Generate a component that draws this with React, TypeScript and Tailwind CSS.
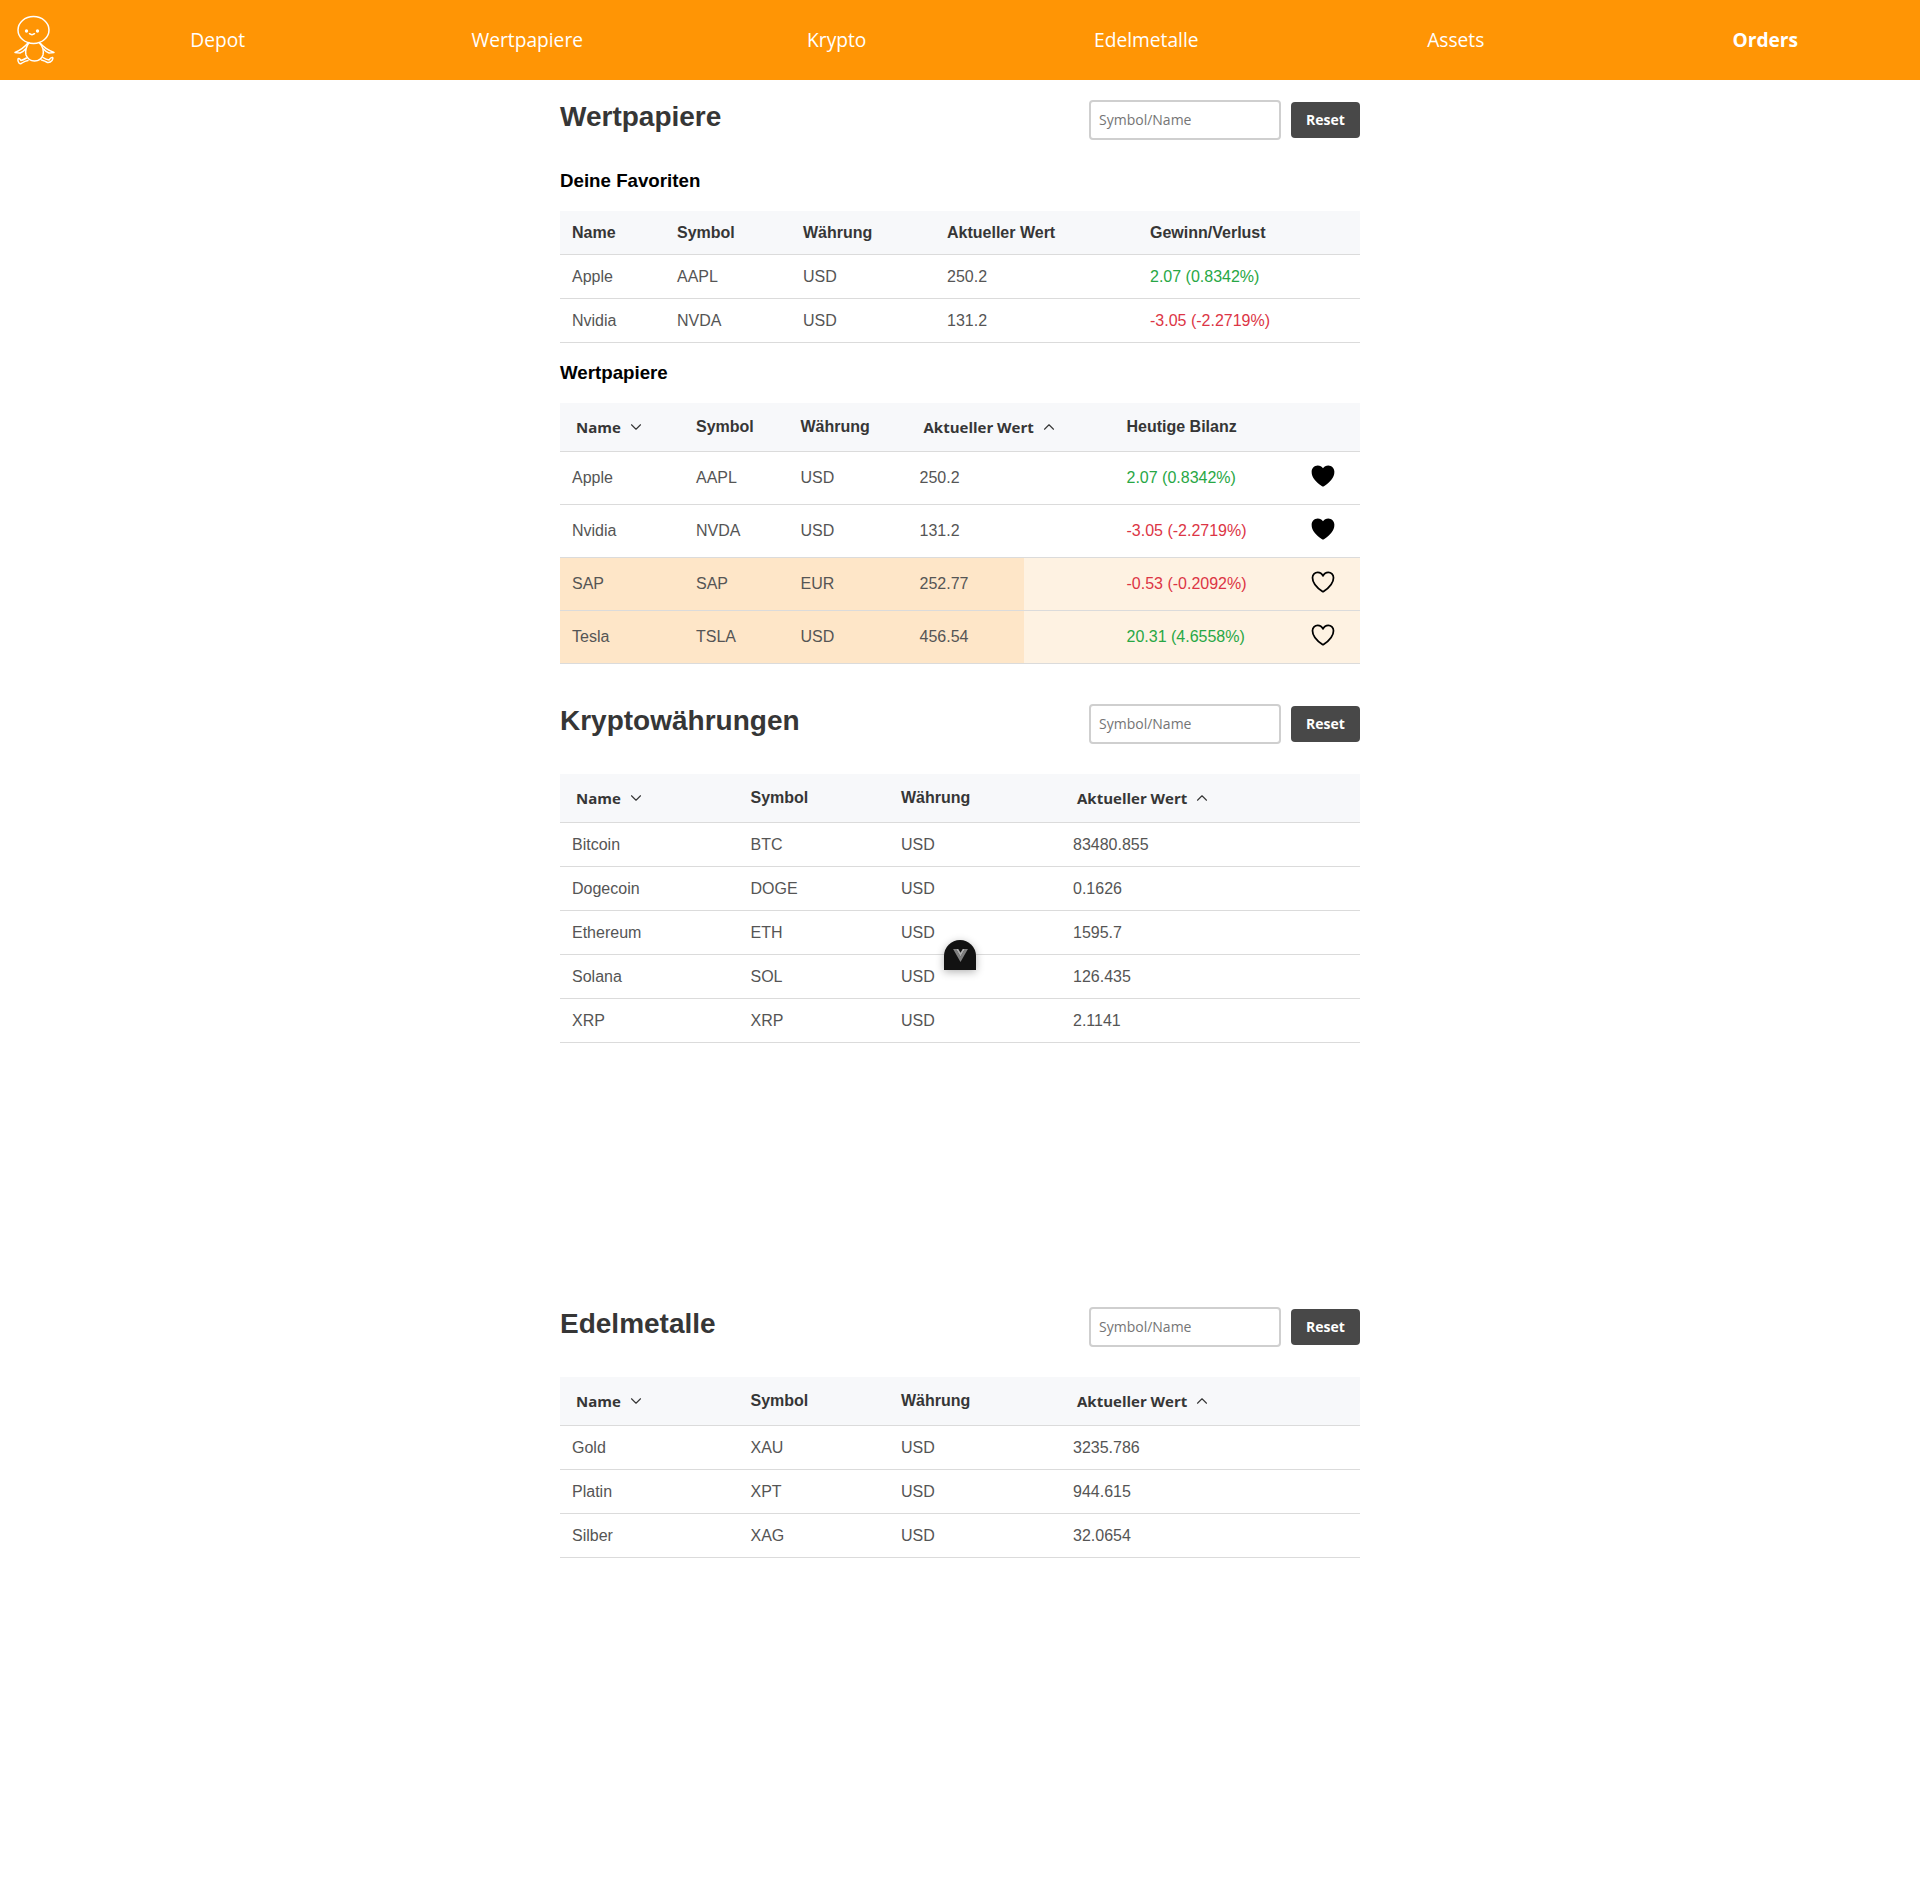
import React from "react";
import { IoHeart, IoHeartOutline } from "react-icons/io5";
import { ChevronDown, ChevronUp } from "lucide-react";

const green = "text-[#28a745]";
const red = "text-[#dc3545]";

function Logo() {
  return (
    <svg viewBox="0 0 63 80" className="h-20 w-[63px] shrink-0" fill="none" stroke="white" strokeWidth="1.5" strokeLinecap="round" strokeLinejoin="round">
      <ellipse cx="33.5" cy="30" rx="15.5" ry="13.5" />
      <circle cx="26.5" cy="31" r="0.9" fill="white" />
      <circle cx="37.5" cy="31" r="0.9" fill="white" />
      <path d="M29.5 33.7 Q32 35.6 34.5 33.7" />
      <path d="M29 42.5 Q24.5 49 26 55 Q28.5 61 34.5 61 Q41 61 43 55 Q44.5 48 39 42.5" />
      <path d="M28 43 Q23 49 15 52.5 L20 53 Q23 52 25.5 49" />
      <path d="M40 43 Q45 49 54 52.5 L49 53 Q46 52 43.5 49" />
      <path d="M26.5 58 Q23 60 21 60.5 Q19 57.5 18 59 Q17.5 61 19 63 Q20.5 64.5 22 63 Q25 61 28 60.5" />
      <path d="M41.5 60 Q45 61 47.5 62.5 Q50 63 52 60.5 Q53.5 58 52.5 57.5 Q51 57 49 60 Q46 59.5 43 57.5" />
    </svg>
  );
}

function Nav() {
  const items = ["Depot", "Wertpapiere", "Krypto", "Edelmetalle", "Assets", "Orders"];
  return (
    <nav className="flex h-20 items-center bg-[#ff9505] font-['Open_Sans',sans-serif] text-[19.2px] text-white">
      <Logo />
      {items.map((t) => (
        <a key={t} className={`flex-1 text-center ${t === "Orders" ? "font-bold" : ""}`}>{t}</a>
      ))}
    </nav>
  );
}

function SectionHead({ title }: { title: string }) {
  return (
    <div className="flex h-[40px] items-start justify-between">
      <h2 className="text-[28px] leading-[34px] font-bold text-[#363636]">{title}</h2>
      <div className="flex items-center gap-[10px]">
        <input
          placeholder="Symbol/Name"
          className="h-10 w-[192px] rounded-[4px] border-2 border-[#cfcfcf] bg-white px-2 pb-[1px] font-['Open_Sans',sans-serif] text-[14px] text-[#363636] placeholder:text-[#757575]"
        />
        <button className="h-9 w-[69px] rounded-[4px] bg-[#484848] pb-[1px] font-['Open_Sans',sans-serif] text-[14px] font-bold text-white">Reset</button>
      </div>
    </div>
  );
}

function SortHead({ label, up }: { label: string; up?: boolean }) {
  return (
    <span className="flex items-center gap-[6px] pl-1 pt-[1px] font-['Open_Sans',sans-serif] text-[15px] font-bold text-[#363636]">
      {label}
      {up ? <ChevronUp size={18} strokeWidth={1.5} /> : <ChevronDown size={18} strokeWidth={1.5} />}
    </span>
  );
}

function Th({ children, w }: { children?: React.ReactNode; w?: string }) {
  return <th className={`border-b border-[#dbdbdb] px-3 text-left align-middle text-[16px] font-bold text-[#363636] ${w ?? ""}`}>{children}</th>;
}

function Td({ children, className }: { children?: React.ReactNode; className?: string }) {
  return <td className={`border-b border-[#dbdbdb] px-3 align-middle ${className ?? ""}`}>{children}</td>;
}

function Heart({ filled }: { filled?: boolean }) {
  const cls = "ml-[-2px] mb-[4px] size-7 text-black";
  return filled ? <IoHeart className={cls} /> : <IoHeartOutline className={cls} />;
}

const favs = [
  ["Apple", "AAPL", "USD", "250.2", "2.07 (0.8342%)", green],
  ["Nvidia", "NVDA", "USD", "131.2", "-3.05 (-2.2719%)", red],
];

function Favorites() {
  const h = "w-[105px] pt-[2px]";
  return (
    <table className="w-full table-fixed border-collapse">
      <thead>
        <tr className="h-[43px] bg-[#f7f8fa]">
          <Th w={h}>Name</Th>
          <Th w="w-[126px] pt-[2px]">Symbol</Th>
          <Th w="w-[144px] pt-[2px]">Währung</Th>
          <Th w="w-[203px] pt-[2px]">Aktueller Wert</Th>
          <Th w="pt-[2px]">Gewinn/Verlust</Th>
        </tr>
      </thead>
      <tbody>
        {favs.map((r) => (
          <tr key={r[0]} className="h-11">
            <Td className="pt-[2px]">{r[0]}</Td>
            <Td className="pt-[2px]">{r[1]}</Td>
            <Td className="pt-[2px]">{r[2]}</Td>
            <Td className="pt-[2px]">{r[3]}</Td>
            <Td className={`pt-[2px] ${r[5]}`}>{r[4]}</Td>
          </tr>
        ))}
      </tbody>
    </table>
  );
}

const stocks: [string, string, string, string, string, string, boolean, boolean][] = [
  ["Apple", "AAPL", "USD", "250.2", "2.07 (0.8342%)", green, true, false],
  ["Nvidia", "NVDA", "USD", "131.2", "-3.05 (-2.2719%)", red, true, false],
  ["SAP", "SAP", "EUR", "252.77", "-0.53 (-0.2092%)", red, false, true],
  ["Tesla", "TSLA", "USD", "456.54", "20.31 (4.6558%)", green, false, true],
];

function Stocks() {
  return (
    <table className="w-full table-fixed border-collapse">
      <thead>
        <tr className="h-[49px] bg-[#f7f8fa]">
          <Th w="w-[124px]"><SortHead label="Name" /></Th>
          <Th w="w-[104.5px]">Symbol</Th>
          <Th w="w-[119px]">Währung</Th>
          <Th w="w-[207px]"><SortHead label="Aktueller Wert" up /></Th>
          <Th w="w-[184px]">Heutige Bilanz</Th>
          <Th />
        </tr>
      </thead>
      <tbody>
        {stocks.map((r) => (
          <tr key={r[0]} className={`h-[53px] ${r[7] ? "bg-[linear-gradient(90deg,#fee6c8_464px,#fef2e2_464px)]" : ""}`}>
            <Td>{r[0]}</Td>
            <Td>{r[1]}</Td>
            <Td>{r[2]}</Td>
            <Td>{r[3]}</Td>
            <Td className={r[5]}>{r[4]}</Td>
            <Td><Heart filled={r[6]} /></Td>
          </tr>
        ))}
      </tbody>
    </table>
  );
}

function Simple({ rows, headClass, cellClass }: { rows: string[][]; headClass: string; cellClass?: string }) {
  return (
    <table className="w-full table-fixed border-collapse">
      <thead>
        <tr className={`${headClass} bg-[#f7f8fa]`}>
          <Th w="w-[178.5px]"><SortHead label="Name" /></Th>
          <Th w="w-[150.5px]">Symbol</Th>
          <Th w="w-[172px]">Währung</Th>
          <Th><SortHead label="Aktueller Wert" up /></Th>
        </tr>
      </thead>
      <tbody>
        {rows.map((r) => (
          <tr key={r[0]} className="h-11">
            {r.map((c) => <Td key={c} className={cellClass}>{c}</Td>)}
          </tr>
        ))}
      </tbody>
    </table>
  );
}

const crypto = [
  ["Bitcoin", "BTC", "USD", "83480.855"],
  ["Dogecoin", "DOGE", "USD", "0.1626"],
  ["Ethereum", "ETH", "USD", "1595.7"],
  ["Solana", "SOL", "USD", "126.435"],
  ["XRP", "XRP", "USD", "2.1141"],
];
const metals = [
  ["Gold", "XAU", "USD", "3235.786"],
  ["Platin", "XPT", "USD", "944.615"],
  ["Silber", "XAG", "USD", "32.0654"],
];

function Devtools() {
  return (
    <div className="absolute top-[940px] left-[944px] flex h-[30px] w-8 items-center justify-center rounded-t-full bg-[#121212] shadow-[0_2px_8px_rgba(0,0,0,0.3)]">
      <svg viewBox="0 0 16 14" className="h-[13px] w-[15px]">
        <path d="M0 0 L3.2 0 L8 8 L12.8 0 L16 0 L8 14 Z" fill="#808080" />
        <path d="M3.2 0 L5.6 0 L8 4 L10.4 0 L12.8 0 L8 8 Z" fill="#b0b0b0" />
      </svg>
    </div>
  );
}

export default function App() {
  return (
    <div className="relative min-h-[1891px] bg-white font-['Liberation_Sans',Arial,sans-serif] text-[16px] text-[#555555]">
      <Nav />
      <main className="mx-auto w-[800px]">
        <div className="pt-5"><SectionHead title="Wertpapiere" /></div>
        <h3 className="mt-[29px] text-[18.72px] leading-[24px] font-bold text-black">Deine Favoriten</h3>
        <div className="mt-[18px]"><Favorites /></div>
        <h3 className="mt-[18px] text-[18.72px] leading-[24px] font-bold text-black">Wertpapiere</h3>
        <div className="mt-[18px]"><Stocks /></div>
        <div className="mt-10"><SectionHead title="Kryptowährungen" /></div>
        <div className="mt-[30px]"><Simple rows={crypto} headClass="h-12" cellClass="pt-[2px]" /></div>
        <div className="mt-[264px]"><SectionHead title="Edelmetalle" /></div>
        <div className="mt-[30px]"><Simple rows={metals} headClass="h-[49px]" /></div>
      </main>
      <Devtools />
    </div>
  );
}
